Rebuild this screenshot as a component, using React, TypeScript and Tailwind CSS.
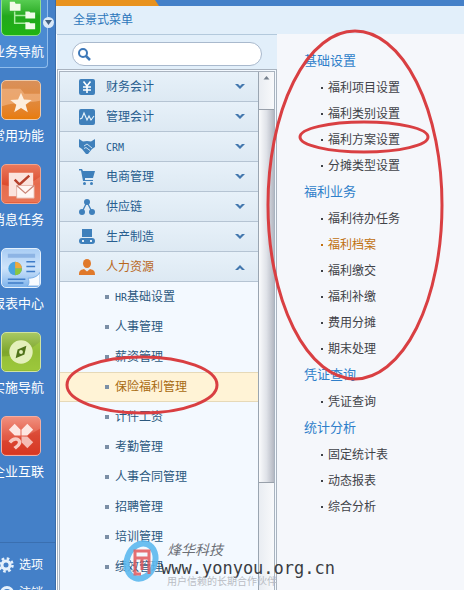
import { useState } from "react";
import type { ReactNode } from "react";

type Module = { name: string; icon: ReactNode };

const navItems: { name: string; tile: string; icon: ReactNode }[] = [
  {
    name: "业务导航",
    tile: "bg-linear-to-b from-[#5fd45a] via-[#22a81c] to-[#1fb312] border-[#8fe08a]",
    icon: (
      <g>
        <path d="M13 15v12h12M13 19h12" fill="none" stroke="#a9eba0" strokeWidth="1.5" />
        <path d="M8 5h5l1 2h5v7H8zM24 15h4l1 1h5v6H24zM24 26h4l1 1h5v6H24z" fill="#f1fbe9" />
      </g>
    ),
  },
  {
    name: "常用功能",
    tile: "bg-linear-to-b from-[#d9905a] via-[#e08a3e] to-[#e87c08] border-[#eec9a8]",
    icon: (
      <g>
        <path d="M0 8h19l4 5h17v7c-12 3-26 1-40 6z" fill="#f3b98a" opacity=".6" />
        <path d="M19.500 12l3 7 8 .5-6.200 5 2.200 7.500-7-4.300-7 4.300 2.200-7.500-6.200-5 8-.5z" fill="#fdeedd" />
      </g>
    ),
  },
  {
    name: "消息任务",
    tile: "bg-linear-to-b from-[#e8785c] via-[#dd4c2e] to-[#e2603f] border-[#f0a48e]",
    icon: (
      <g>
        <path d="M0 20c14 4 26 2 39-8v26H0z" fill="#f08a6c" opacity=".5" />
        <path d="M7 8h25v24H7z" fill="#fbe3dd" />
        <path d="M13 15l5 5 10-9" fill="none" stroke="#b5402c" strokeWidth="2.500" />
        <path d="M15 21h18v13H15z" fill="#fff6f3" stroke="#e0a99c" strokeWidth=".8" />
        <path d="M15 21l9 8 9-8" fill="none" stroke="#c98476" strokeWidth="1.200" />
      </g>
    ),
  },
  {
    name: "报表中心",
    tile: "bg-linear-to-b from-[#a9cdf4] via-[#cfe4fa] to-[#7fb4ec] border-[#e3f0fd]",
    icon: (
      <g>
        <path d="M6 5h28v4H6z" fill="#8db4e4" />
        <path d="M25 13h9M25 18h9M25 23h9M6 31h18M6 35h16" stroke="#3f7cc8" strokeWidth="1.500" />
        <circle cx="13.500" cy="20" r="7" fill="#4aa3df" />
        <path d="M13.500 20v-7a7 7 0 0 1 7 7z" fill="#f0a93c" />
        <path d="M13.500 20h7a7 7 0 0 1-7 7z" fill="#8cc63f" />
        <path d="M26 38c3-3 1-7 1-8 4 0 9-1 12-6v14z" fill="#f7fbff" stroke="#6aa3e0" strokeWidth=".8" />
      </g>
    ),
  },
  {
    name: "实施导航",
    tile: "bg-linear-to-b from-[#a8c862] via-[#7da62a] to-[#93bd35] border-[#cfe3a0]",
    icon: (
      <g>
        <path d="M0 24c15 0 27-5 39-15v29H0z" fill="#a4cf3f" opacity=".6" />
        <circle cx="19.500" cy="19.500" r="12" fill="#e4f0bb" />
        <path d="M25 13l-2 9-9 4 2-9z" fill="#50731b" />
        <circle cx="19.500" cy="19.500" r="2" fill="#e4f0bb" />
      </g>
    ),
  },
  {
    name: "企业互联",
    tile: "bg-linear-to-b from-[#f08f7e] via-[#e25c48] to-[#dd3f28] border-[#f3aea2]",
    icon: (
      <g fill="#fde6e1">
        <path d="M0 24c15 0 27-5 39-12v26H0z" fill="#cf2a17" opacity=".4" />
        <path d="M13 7l6 6v6h-6l-6-6zM26 7l6 6-6 6h-6v-6z" />
        <path d="M20 20h6l6 6-6 6-6-6z" opacity=".75" />
        <path d="M8 26c5-6 11-3 10 1-1 3-4 4-5 5" fill="none" stroke="#f9c9c0" strokeWidth="3.500" />
      </g>
    ),
  },
];

const modules: Module[] = [
  {
    name: "财务会计",
    icon: (
      <g>
        <rect width="16" height="16" rx="2" />
        <path d="M4.500 2.500L8 7l3.500-4.500M8 7v7M4 8h8M4 11h8" fill="none" stroke="#fff" strokeWidth="1.600" />
      </g>
    ),
  },
  {
    name: "管理会计",
    icon: (
      <g>
        <rect width="16" height="16" rx="2" />
        <path d="M1 10l2-1 2-5 3 7 2-4 2 4 3-4" fill="none" stroke="#e8f3fb" strokeWidth="1.100" />
      </g>
    ),
  },
  {
    name: "CRM",
    icon: (
      <g>
        <path d="M0 0l4 2.500 4-.5 4 .5L16 0v8l-3 2-4 5H7l-4-5-3-2z" />
        <path d="M5 7l3-2 5 4M5 9.500l2-1 4 3" fill="none" stroke="#dcebf6" strokeWidth=".9" />
      </g>
    ),
  },
  {
    name: "电商管理",
    icon: (
      <g>
        <path d="M0 0h3l1 2h12l-2 7H6v2h8v1H4L2 1.500H0z" />
        <circle cx="5.500" cy="14.500" r="1.500" />
        <circle cx="12.500" cy="14.500" r="1.500" />
      </g>
    ),
  },
  {
    name: "供应链",
    icon: (
      <g>
        <path d="M8 3L3 13M8 3l5 10" fill="none" stroke="currentColor" strokeWidth="1.300" />
        <circle cx="8" cy="3" r="3" />
        <circle cx="3" cy="13" r="3" />
        <circle cx="13" cy="13" r="3" />
      </g>
    ),
  },
  {
    name: "生产制造",
    icon: (
      <g>
        <path d="M3 0h10v8H3z" />
        <rect y="9" width="16" height="6" rx="3" />
        <path d="M3 12h2M11 12h2" stroke="#e3eef7" strokeWidth="2" />
      </g>
    ),
  },
  {
    name: "人力资源",
    icon: (
      <g>
        <ellipse cx="8" cy="4.500" rx="4" ry="4.500" />
        <path d="M0 16c0-4 1-5 5-6l3 2.500L11 10c4 1 5 2 5 6z" />
      </g>
    ),
  },
];

const hrItems = [
  "HR基础设置",
  "人事管理",
  "薪资管理",
  "保险福利管理",
  "计件工资",
  "考勤管理",
  "人事合同管理",
  "招聘管理",
  "培训管理",
  "绩效管理",
];

const groups = [
  { title: "基础设置", items: ["福利项目设置", "福利类别设置", "福利方案设置", "分摊类型设置"] },
  { title: "福利业务", items: ["福利待办任务", "福利档案", "福利缴交", "福利补缴", "费用分摊", "期末处理"] },
  { title: "凭证查询", items: ["凭证查询"] },
  { title: "统计分析", items: ["固定统计表", "动态报表", "综合分析"] },
];

// latin prefixes are set in a narrow mono face beside the 12px hanzi
function Label({ text }: { text: string }) {
  const latin = text.match(/^[A-Z]+/)?.[0] ?? "";
  return (
    <span>
      {latin && <span className="font-['DejaVu_Sans_Mono',monospace] text-[10px]">{latin}</span>}
      {text.slice(latin.length)}
    </span>
  );
}

function Chevron({ up }: { up: boolean }) {
  return (
    <svg width="10" height="6" viewBox="0 0 10 6" className={`ml-auto text-[#4377ae] ${up ? "rotate-180" : ""}`}>
      <path d="M0 0h3l2 2 2-2h3L5 5z" fill="currentColor" />
    </svg>
  );
}

function Gear() {
  return (
    <svg width="16" height="16" viewBox="0 0 16 16" className="shrink-0">
      <circle cx="8" cy="8" r="4" fill="none" stroke="#e6f1fc" strokeWidth="3" />
      <circle cx="8" cy="8" r="6.500" fill="none" stroke="#e6f1fc" strokeWidth="2.500" strokeDasharray="2.600 2.500" />
    </svg>
  );
}

function Sidebar() {
  return (
    <nav className="relative flex w-14 shrink-0 flex-col overflow-hidden border-r border-[#3a6ca8] bg-[#4480c8] text-white">
      <ul>
        {navItems.map((n, i) => (
          <li
            key={n.name}
            className={`flex flex-col ${i === 0 ? "-mt-1 mr-[7px] h-[72px] rounded-br border-r border-b border-[#8fbcec] bg-[#4a8ad2]" : "h-[84px] pt-3"}`}
          >
            <a href="#" className="flex flex-col">
              <svg width="40" height="40" viewBox="0 0 39 39" className={`ml-px rounded-[5px] border ${n.tile}`}>
                {n.icon}
              </svg>
              <span className="-ml-2 pt-1.5 text-[13px] leading-5 whitespace-nowrap">{n.name}</span>
            </a>
          </li>
        ))}
      </ul>
      <div className="mt-auto h-12 overflow-hidden border-t border-[#3a6fb0] pt-2">
        <a href="#" className="-ml-0.5 flex h-7 items-center gap-[5px] text-xs whitespace-nowrap">
          <Gear />
          选项
        </a>
        <a href="#" className="-ml-0.5 flex h-7 items-center gap-[5px] text-xs whitespace-nowrap">
          <svg width="16" height="16" viewBox="0 0 16 16" className="shrink-0">
            <circle cx="9" cy="8" r="5.500" fill="none" stroke="#e6f1fc" strokeWidth="3" />
          </svg>
          注销
        </a>
      </div>
    </nav>
  );
}

function Tree() {
  const [open, setOpen] = useState("人力资源");

  return (
    <div className="flex min-h-0 flex-1 border-3 border-b-0 border-double border-[#a9b3bf] bg-[#f3f9ff]">
      <ul className="min-w-0 flex-1 overflow-hidden">
        {modules.map((m) => {
          const active = m.name === open;
          return (
            <li key={m.name}>
              <button
                type="button"
                aria-expanded={active}
                onClick={() => setOpen(active ? "" : m.name)}
                className={`flex h-[30px] w-full items-center gap-[11px] border-b border-[#b5c4d3] bg-linear-to-b from-[#e7f1f9] to-[#dde9f3] pr-[13px] pl-[19px] ${active ? "text-[#b8661c]" : "text-[#285e90]"}`}
              >
                <svg width="16" height="16" viewBox="0 0 16 16" fill="currentColor" className={active ? "text-[#e0792a]" : "text-[#3f80bb]"}>
                  {m.icon}
                </svg>
                <Label text={m.name} />
                <Chevron up={active} />
              </button>
              {active && m.name === "人力资源" && (
                <ul>
                  {hrItems.map((name) => (
                    <li key={name}>
                      <a
                        href="#"
                        className={`flex h-[30px] items-center gap-1.5 border-y pl-[45px] ${
                          name === "保险福利管理"
                            ? "border-[#e6d9b8] bg-[#fff3d6] text-[#a86a10]"
                            : "border-transparent text-[#2b587e]"
                        }`}
                      >
                        <span className="size-1 bg-[#7b8fa6]" />
                        <Label text={name} />
                      </a>
                    </li>
                  ))}
                </ul>
              )}
            </li>
          );
        })}
      </ul>
      <div className="flex w-4 shrink-0 flex-col border-l border-[#9aa5b1] bg-linear-to-r from-[#e9edf2] to-[#f8f9fb]">
        <svg width="15" height="37" viewBox="0 0 15 37" className="shrink-0">
          <path d="M4.500 7.500L7.500 4l3 3.500z" fill="#75808d" />
        </svg>
        <div className="h-[374px] border-y border-[#98a0aa] bg-linear-to-r from-[#fafbfc] via-[#dfe2e8] to-[#b4b8c2]" />
      </div>
    </div>
  );
}

function Watermark() {
  return (
    <div className="pointer-events-none absolute bottom-0 left-[121px] flex">
      <svg width="40" height="50" viewBox="0 0 40 50" className="shrink-0">
        <ellipse cx="20" cy="21" rx="14" ry="18" fill="none" stroke="#5cb8ee" strokeWidth="6" transform="rotate(20 20 21)" opacity=".9" />
        <path d="M20 34h-6V11h14v23M14 18h14M21 18v12" fill="none" stroke="#e2575a" strokeWidth="3" opacity=".85" />
      </svg>
      <div className="flex flex-col pb-0.5 whitespace-nowrap">
        <span className="pl-1.5 text-sm leading-5 text-[#6b6f76] italic">烽华科技</span>
        <span className="font-['DejaVu_Sans_Mono',monospace] text-[17px] leading-4 text-[#3a3d43]">www.yonyou.org.cn</span>
        <span className="pl-1.5 text-[10px] leading-3 text-[#b9bcc3]">用户信赖的长期合作伙伴</span>
      </div>
    </div>
  );
}

export default function App() {
  return (
    <div className="relative flex h-screen overflow-hidden bg-[#f5f7fb] font-['Liberation_Sans','Noto_Sans_CJK_SC',sans-serif] text-xs">
      <Sidebar />

      <main className="flex min-w-0 flex-1 flex-col">
        <div className="flex h-1.5 shrink-0 bg-[#4480c8]">
          <svg width="103" height="6" viewBox="0 0 103 6">
            <path d="M0 0h99l4 6H0z" fill="#e8921e" />
          </svg>
        </div>
        <h1 className="h-7 shrink-0 bg-[#e2effa] pl-[17px] text-xs leading-7 text-[#2c76bb]">全景式菜单</h1>

        <div className="flex min-h-0 flex-1">
          <section className="flex w-[221px] shrink-0 flex-col border-l border-white">
            <div className="relative border-t border-[#b3c9dc] bg-[#e2effa] pt-[7px] pr-[15px] pb-[3px] pl-[15px]">
              <label htmlFor="menu-search" className="sr-only">搜索</label>
              <input
                id="menu-search"
                type="search"
                className="block h-6 w-full rounded-full border border-[#a9b9cd] bg-white pr-3 pl-7 outline-none"
              />
              <svg width="13" height="13" viewBox="0 0 13 13" className="absolute top-[13px] left-[21px]">
                <circle cx="5" cy="5" r="4" fill="none" stroke="#3d78b8" strokeWidth="2" />
                <path d="M8 8l4 4" stroke="#3d78b8" strokeWidth="2.500" />
              </svg>
            </div>
            <Tree />
          </section>

          <section className="min-w-0 flex-1 overflow-hidden pt-3.5 pl-[27px]">
            {groups.map((g) => (
              <div key={g.title}>
                <h2 className="h-[27px] text-[13px] leading-[26px] text-[#2f7fca]">{g.title}</h2>
                <ul className="pl-[17px]">
                  {g.items.map((item) => (
                    <li key={item}>
                      <a
                        href="#"
                        className={`flex h-[26px] items-center gap-[5px] ${item === "福利档案" ? "text-[#c0700f]" : "text-[#3f4248]"}`}
                      >
                        <span className="size-0.5 bg-current" />
                        {item}
                      </a>
                    </li>
                  ))}
                </ul>
              </div>
            ))}
          </section>
        </div>
      </main>

      <button type="button" aria-label="展开" className="absolute top-[17px] left-[43px] flex size-[11px] items-center justify-center rounded-full bg-[#dbe9f8]">
        <svg width="7" height="5" viewBox="0 0 7 5">
          <path d="M0 0h7L3.500 5z" fill="#44617f" />
        </svg>
      </button>

      <Watermark />

      {/* hand-drawn callouts over the menu */}
      <svg width="464" height="590" viewBox="0 0 464 590" fill="none" stroke="#d93f42" strokeWidth="3" className="pointer-events-none absolute top-0 left-0">
        <ellipse cx="355" cy="205" rx="87" ry="174" />
        <ellipse cx="364" cy="137" rx="64" ry="15" />
        <ellipse cx="142" cy="385" rx="75" ry="28" />
      </svg>
    </div>
  );
}
